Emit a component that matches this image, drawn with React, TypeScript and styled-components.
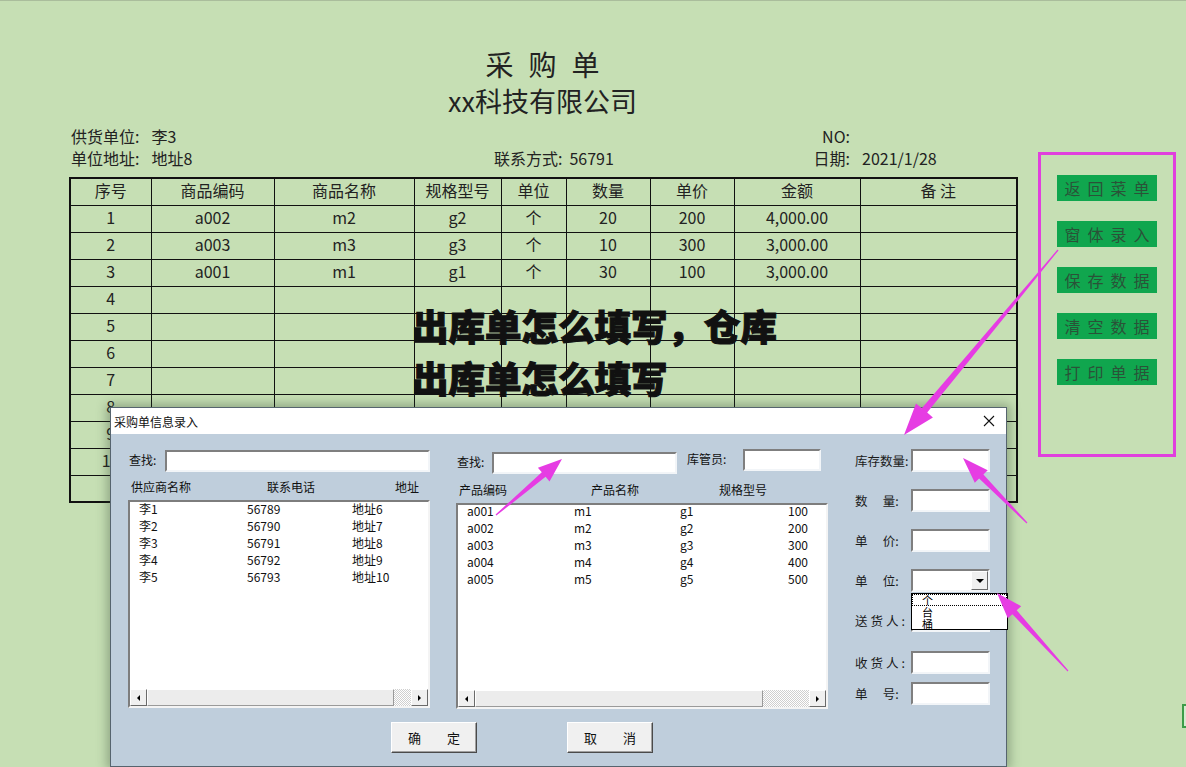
import React from 'react';
import styled, { createGlobalStyle } from 'styled-components';

const FONT = `"Noto Sans CJK SC", "Noto Sans", "Liberation Sans", sans-serif`;

const GlobalStyle = createGlobalStyle`
  html, body { margin: 0; padding: 0; background: #c6dfb4; }
  body { font-family: ${FONT}; color: #222; }
  * { box-sizing: border-box; }
`;

const Page = styled.div`
  position: relative;
  width: 1186px;
  height: 767px;
  overflow: hidden;
  background: #c6dfb4;
  border-top: 1px solid #aabd9c;
  display: flex;
  align-items: flex-start;
  padding-left: 69px;
`;

const Sheet = styled.div`
  width: 947px;
  flex: none;
  display: flex;
  flex-direction: column;
  padding-top: 45px;
`;

const Title = styled.div`
  text-align: center;
  font-size: 28px;
  line-height: 36px;
  letter-spacing: 15px;
  padding-left: 15px;
  color: #222;
`;

const Company = styled.div`
  text-align: center;
  font-size: 27px;
  line-height: 38px;
  color: #222;
`;

const InfoGrid = styled.div`
  margin-top: 5px;
  display: grid;
  grid-template-columns: 425px 316px 1fr;
  grid-auto-rows: 22px;
  font-size: 16px;
  line-height: 22px;
  color: #222;
`;

const Field = styled.div<{ $gap: number; $pad?: number }>`
  display: flex;
  gap: ${(p) => p.$gap}px;
  padding-left: ${(p) => p.$pad ?? 0}px;
  white-space: nowrap;
`;

const FieldLabel = styled.span<{ $w?: number }>`
  ${(p) => (p.$w ? `width: ${p.$w}px; text-align: right;` : '')}
`;

const Grid = styled.table`
  margin-top: 8px;
  width: 947px;
  border-collapse: collapse;
  table-layout: fixed;
  border: 2px solid #111;
  font-size: 16px;
  color: #222;

  th,
  td {
    border: 1px solid #111;
    height: 27px;
    padding: 0 0 4px 0;
    text-align: center;
    font-weight: normal;
    line-height: 20px;
  }
`;

const Side = styled.div`
  flex: none;
  margin-left: 22px;
  margin-top: 151px;
  width: 138px;
  height: 305px;
  border: 3px solid #e040dd;
  display: flex;
  flex-direction: column;
  align-items: center;
  padding-top: 20px;
  gap: 20px;
`;

const SideButton = styled.div`
  width: 100px;
  height: 26px;
  background: #10a64e;
  color: #2a5238;
  font-size: 16px;
  line-height: 26px;
  letter-spacing: 7px;
  padding-left: 7px;
  text-align: center;
`;

const BigText = styled.div`
  position: absolute;
  left: 412px;
  top: 299px;
  width: 380px;
  font-size: 36.5px;
  line-height: 52px;
  font-weight: 900;
  color: #111;
  -webkit-text-stroke: 1.1px #111;
  z-index: 3;
`;

const Dialog = styled.div`
  position: absolute;
  left: 110px;
  top: 406px;
  width: 897px;
  height: 360px;
  border: 1px solid #56646e;
  background: #bfcedc;
  box-shadow: 0 0 10px 3px rgba(40, 60, 40, 0.35);
  display: flex;
  flex-direction: column;
  z-index: 5;
  font-size: 12px;
  color: #111;
`;

const TitleBar = styled.div`
  height: 26px;
  flex: none;
  background: #fff;
  display: flex;
  align-items: center;
  justify-content: space-between;
  padding: 0 11px 0 3px;
  font-size: 12px;
  color: #111;
`;

const DialogBody = styled.div`
  flex: 1;
  display: flex;
  flex-direction: column;
  padding: 15px 0 0 17px;
`;

const Sections = styled.div`
  display: flex;
  align-items: flex-start;
  height: 260px;
`;

const Section = styled.div<{ $w: number; $mr?: number }>`
  width: ${(p) => p.$w}px;
  margin-right: ${(p) => p.$mr ?? 0}px;
  display: flex;
  flex-direction: column;
  flex: none;
`;

const SearchRow = styled.div<{ $mt?: number }>`
  display: flex;
  align-items: flex-start;
  margin-top: ${(p) => p.$mt ?? 0}px;
`;

const InlineLabel = styled.span<{ $w: number; $mt?: number; $ml?: number }>`
  width: ${(p) => p.$w}px;
  margin-left: ${(p) => p.$ml ?? 0}px;
  margin-top: ${(p) => p.$mt ?? 0}px;
  line-height: 20px;
  padding-left: 1px;
  font-size: 12px;
  flex: none;
`;

const Input = styled.div<{ $w?: number; $mt?: number }>`
  ${(p) => (p.$w ? `width: ${p.$w}px; flex: none;` : 'flex: 1;')}
  height: 22px;
  margin-top: ${(p) => p.$mt ?? 0}px;
  background: #fff;
  border: 2px solid;
  border-color: #7f7f7f #f2f5f8 #f2f5f8 #7f7f7f;
`;

const HeaderRow = styled.div<{ $cols: string; $mt: number }>`
  display: grid;
  grid-template-columns: ${(p) => p.$cols};
  margin-top: ${(p) => p.$mt}px;
  line-height: 16px;
  padding-left: 3px;
  font-size: 12px;
  white-space: nowrap;
`;

const ListBox = styled.div<{ $h: number }>`
  height: ${(p) => p.$h}px;
  margin-top: 5px;
  background: #fff;
  border: 2px solid;
  border-color: #7d7d7d #f4f4f4 #f4f4f4 #7d7d7d;
  display: flex;
  flex-direction: column;
`;

const ListRows = styled.div<{ $shift: number }>`
  flex: 1;
  margin-top: ${(p) => -p.$shift}px;
  font-size: 12px;
  color: #111;
`;

const ListRow = styled.div<{ $cols: string }>`
  display: grid;
  grid-template-columns: ${(p) => p.$cols};
  line-height: 17px;
  padding-left: 9px;
  padding-right: 18px;
  white-space: nowrap;
`;

const NumCell = styled.span`
  text-align: right;
`;

const HScroll = styled.div`
  height: 17px;
  flex: none;
  display: flex;
`;

const ScrollBtn = styled.div`
  width: 17px;
  height: 17px;
  flex: none;
  background: #f0f0f0;
  border: 1px solid;
  border-color: #fff #6a6a6a #6a6a6a #fff;
  display: flex;
  align-items: center;
  justify-content: center;
`;

const Tri = styled.span<{ $dir: 'left' | 'right' | 'down' }>`
  width: 0;
  height: 0;
  ${(p) =>
    p.$dir === 'left'
      ? 'border-top: 3px solid transparent; border-bottom: 3px solid transparent; border-right: 3px solid #000;'
      : p.$dir === 'right'
      ? 'border-top: 3px solid transparent; border-bottom: 3px solid transparent; border-left: 3px solid #000;'
      : 'border-left: 4px solid transparent; border-right: 4px solid transparent; border-top: 4px solid #000;'}
`;

const Thumb = styled.div`
  flex: 1;
  background: #ececec;
  border: 1px solid;
  border-color: #fff #9a9a9a #9a9a9a #fff;
`;

const Track = styled.div<{ $w: number }>`
  width: ${(p) => p.$w}px;
  flex: none;
  background-color: #fff;
  background-image: repeating-conic-gradient(#cfcfcf 0 25%, #fff 0 50%);
  background-size: 2px 2px;
`;

const FormCol = styled.div`
  display: flex;
  flex-direction: column;
  width: 153px;
`;

const FormRow = styled.div<{ $mt: number }>`
  position: relative;
  display: flex;
  align-items: center;
  height: 23px;
  margin-top: ${(p) => p.$mt}px;
`;

const FormLabel = styled.span<{ $ls?: number }>`
  width: 56px;
  flex: none;
  font-size: 12.5px;
  letter-spacing: ${(p) => p.$ls ?? 0}px;
  color: #1a1a1a;
  white-space: pre;
`;

const FormInput = styled.div`
  width: 79px;
  height: 23px;
  background: #fff;
  border: 2px solid;
  border-color: #7f7f7f #f2f5f8 #f2f5f8 #7f7f7f;
  display: flex;
  align-items: center;
  justify-content: flex-end;
`;

const ComboBtn = styled.div`
  width: 17px;
  height: 19px;
  background: #f0f0f0;
  border: 1px solid;
  border-color: #fff #6a6a6a #6a6a6a #fff;
  display: flex;
  align-items: center;
  justify-content: center;
`;

const DropList = styled.div`
  position: absolute;
  left: 56px;
  top: 24px;
  width: 97px;
  height: 37px;
  background: #fff;
  border: 1px solid #000;
  z-index: 2;
  font-size: 11px;
  color: #000;
  overflow: hidden;
`;

const DropItem = styled.div<{ $focus?: boolean }>`
  height: 12px;
  line-height: 12px;
  padding-left: 10px;
  ${(p) => (p.$focus ? 'outline: 1px dotted #000; outline-offset: -1px;' : '')}
`;

const ButtonRow = styled.div`
  display: flex;
  gap: 90px;
  margin-top: 13px;
  padding-left: 263px;
`;

const DlgButton = styled.div`
  width: 86px;
  height: 31px;
  background: #f0f0f0;
  border: 1px solid;
  border-color: #fff #4a4a4a #4a4a4a #fff;
  box-shadow: inset -1px -1px 0 #a0a0a0;
  display: flex;
  align-items: center;
  justify-content: center;
  font-size: 13px;
  white-space: pre;
  color: #111;
`;

const Overlay = styled.svg`
  position: absolute;
  left: 0;
  top: 0;
  width: 1186px;
  height: 767px;
  pointer-events: none;
  z-index: 10;
`;

const EdgeMark = styled.div`
  position: absolute;
  left: 1182px;
  top: 703px;
  width: 12px;
  height: 24px;
  border: 2px solid #3c9c48;
  background: #d6ead0;
`;

function arrowPoints(
  x1: number,
  y1: number,
  x2: number,
  y2: number,
  head: number,
  hw: number,
  sw: number,
  tw = 0.6
) {
  const dx = x2 - x1;
  const dy = y2 - y1;
  const len = Math.hypot(dx, dy);
  const ux = dx / len;
  const uy = dy / len;
  const nx = -uy;
  const ny = ux;
  const bx = x2 - ux * head;
  const by = y2 - uy * head;
  const pts = [
    [x1 + nx * tw, y1 + ny * tw],
    [bx + nx * sw, by + ny * sw],
    [bx + nx * hw, by + ny * hw],
    [x2, y2],
    [bx - nx * hw, by - ny * hw],
    [bx - nx * sw, by - ny * sw],
    [x1 - nx * tw, y1 - ny * tw],
  ];
  return pts.map((p) => `${p[0].toFixed(1)},${p[1].toFixed(1)}`).join(' ');
}

const arrows = [
  { a: [1058, 249, 904, 434], head: 32, hw: 11, sw: 3.5 },
  { a: [496, 514, 562, 458], head: 24, hw: 9, sw: 3 },
  { a: [1027, 522, 963, 457], head: 26, hw: 9, sw: 3 },
  { a: [1068, 670, 997, 592], head: 26, hw: 9, sw: 3 },
];

const tableRows: string[][] = [
  ['1', 'a002', 'm2', 'g2', '个', '20', '200', '4,000.00', ''],
  ['2', 'a003', 'm3', 'g3', '个', '10', '300', '3,000.00', ''],
  ['3', 'a001', 'm1', 'g1', '个', '30', '100', '3,000.00', ''],
  ['4', '', '', '', '', '', '', '', ''],
  ['5', '', '', '', '', '', '', '', ''],
  ['6', '', '', '', '', '', '', '', ''],
  ['7', '', '', '', '', '', '', '', ''],
  ['8', '', '', '', '', '', '', '', ''],
  ['9', '', '', '', '', '', '', '', ''],
  ['10', '', '', '', '', '', '', '', ''],
  ['', '', '', '', '', '', '', '', ''],
];

const colWidths = [81, 123, 140, 87, 65, 84, 84, 126, 157];
const headers = ['序号', '商品编码', '商品名称', '规格型号', '单位', '数量', '单价', '金额', '备 注'];

const suppliers = [
  ['李1', '56789', '地址6'],
  ['李2', '56790', '地址7'],
  ['李3', '56791', '地址8'],
  ['李4', '56792', '地址9'],
  ['李5', '56793', '地址10'],
];

const products = [
  ['a001', 'm1', 'g1', '100'],
  ['a002', 'm2', 'g2', '200'],
  ['a003', 'm3', 'g3', '300'],
  ['a004', 'm4', 'g4', '400'],
  ['a005', 'm5', 'g5', '500'],
];

const sideButtons = ['返回菜单', '窗体录入', '保存数据', '清空数据', '打印单据'];

function Scrollbar({ track }: { track: number }) {
  return (
    <HScroll>
      <ScrollBtn>
        <Tri $dir="left" />
      </ScrollBtn>
      <Thumb />
      <Track $w={track} />
      <ScrollBtn>
        <Tri $dir="right" />
      </ScrollBtn>
    </HScroll>
  );
}

export default function App() {
  return (
    <>
      <GlobalStyle />
      <Page>
        <Sheet>
          <Title>采购单</Title>
          <Company>xx科技有限公司</Company>
          <InfoGrid>
            <Field $gap={12} $pad={2}>
              <FieldLabel>供货单位:</FieldLabel>
              <span>李3</span>
            </Field>
            <span />
            <Field $gap={12}>
              <FieldLabel $w={40}>NO:</FieldLabel>
            </Field>
            <Field $gap={12} $pad={2}>
              <FieldLabel>单位地址:</FieldLabel>
              <span>地址8</span>
            </Field>
            <Field $gap={7}>
              <FieldLabel>联系方式:</FieldLabel>
              <span>56791</span>
            </Field>
            <Field $gap={12}>
              <FieldLabel $w={40}>日期:</FieldLabel>
              <span>2021/1/28</span>
            </Field>
          </InfoGrid>
          <Grid>
            <colgroup>
              {colWidths.map((w, i) => (
                <col key={i} style={{ width: w }} />
              ))}
            </colgroup>
            <thead>
              <tr>
                {headers.map((h) => (
                  <th key={h}>{h}</th>
                ))}
              </tr>
            </thead>
            <tbody>
              {tableRows.map((r, i) => (
                <tr key={i}>
                  {r.map((c, j) => (
                    <td key={j}>{c}</td>
                  ))}
                </tr>
              ))}
            </tbody>
          </Grid>
        </Sheet>
        <Side>
          {sideButtons.map((b) => (
            <SideButton key={b}>{b}</SideButton>
          ))}
        </Side>

        <BigText>出库单怎么填写，仓库出库单怎么填写</BigText>

        <Dialog>
          <TitleBar>
            <span>采购单信息录入</span>
            <svg width="12" height="12" viewBox="0 0 12 12">
              <path d="M1 1 L11 11 M11 1 L1 11" stroke="#111" strokeWidth="1.1" fill="none" />
            </svg>
          </TitleBar>
          <DialogBody>
            <Sections>
              <Section $w={302} $mr={26}>
                <SearchRow $mt={1}>
                  <InlineLabel $w={37}>查找:</InlineLabel>
                  <Input />
                </SearchRow>
                <HeaderRow $cols="136px 128px 1fr" $mt={7}>
                  <span>供应商名称</span>
                  <span>联系电话</span>
                  <span>地址</span>
                </HeaderRow>
                <ListBox $h={208}>
                  <ListRows $shift={2}>
                    {suppliers.map((s) => (
                      <ListRow key={s[0]} $cols="108px 105px 1fr">
                        <span>{s[0]}</span>
                        <span>{s[1]}</span>
                        <span>{s[2]}</span>
                      </ListRow>
                    ))}
                  </ListRows>
                  <Scrollbar track={17} />
                </ListBox>
              </Section>

              <Section $w={372} $mr={27}>
                <SearchRow>
                  <InlineLabel $w={36} $mt={3}>
                    查找:
                  </InlineLabel>
                  <Input $w={185} $mt={3} />
                  <InlineLabel $w={57} $ml={9}>
                    库管员:
                  </InlineLabel>
                  <Input $w={78} />
                </SearchRow>
                <HeaderRow $cols="132px 128px 1fr" $mt={8}>
                  <span>产品编码</span>
                  <span>产品名称</span>
                  <span>规格型号</span>
                </HeaderRow>
                <ListBox $h={206}>
                  <ListRows $shift={3}>
                    {products.map((p) => (
                      <ListRow key={p[0]} $cols="107px 106px 1fr 40px">
                        <span>{p[0]}</span>
                        <span>{p[1]}</span>
                        <span>{p[2]}</span>
                        <NumCell>{p[3]}</NumCell>
                      </ListRow>
                    ))}
                  </ListRows>
                  <Scrollbar track={46} />
                </ListBox>
              </Section>

              <FormCol>
                <FormRow $mt={0}>
                  <FormLabel>库存数量:</FormLabel>
                  <FormInput />
                </FormRow>
                <FormRow $mt={17}>
                  <FormLabel>数　 量:</FormLabel>
                  <FormInput />
                </FormRow>
                <FormRow $mt={17}>
                  <FormLabel>单　 价:</FormLabel>
                  <FormInput />
                </FormRow>
                <FormRow $mt={17}>
                  <FormLabel>单　 位:</FormLabel>
                  <FormInput>
                    <ComboBtn>
                      <Tri $dir="down" />
                    </ComboBtn>
                  </FormInput>
                  <DropList>
                    <DropItem $focus>个</DropItem>
                    <DropItem>台</DropItem>
                    <DropItem>桶</DropItem>
                  </DropList>
                </FormRow>
                <FormRow $mt={17}>
                  <FormLabel $ls={3}>送货人:</FormLabel>
                  <FormInput />
                </FormRow>
                <FormRow $mt={19}>
                  <FormLabel $ls={3}>收货人:</FormLabel>
                  <FormInput />
                </FormRow>
                <FormRow $mt={8}>
                  <FormLabel>单　 号:</FormLabel>
                  <FormInput />
                </FormRow>
              </FormCol>
            </Sections>
            <ButtonRow>
              <DlgButton>确　　定</DlgButton>
              <DlgButton>取　　消</DlgButton>
            </ButtonRow>
          </DialogBody>
        </Dialog>

        <EdgeMark />

        <Overlay viewBox="0 0 1186 767">
          {arrows.map((ar, i) => (
            <polygon
              key={i}
              points={arrowPoints(ar.a[0], ar.a[1], ar.a[2], ar.a[3], ar.head, ar.hw, ar.sw)}
              fill="#e63ce3"
            />
          ))}
        </Overlay>
      </Page>
    </>
  );
}
